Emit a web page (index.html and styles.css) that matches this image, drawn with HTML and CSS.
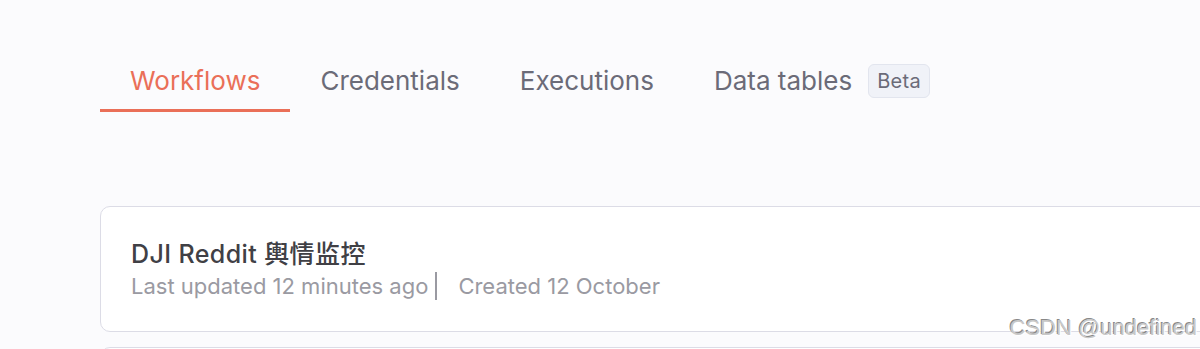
FILE: index.html
```html
<!DOCTYPE html>
<html>
<head>
<meta charset="utf-8">
<link rel="stylesheet" href="styles.css">
</head>
<body>
<div class="page">
  <nav class="tabs">
    <div class="tab active">Workflows</div>
    <div class="tab">Credentials</div>
    <div class="tab">Executions</div>
    <div class="tab">Data tables <span class="badge">Beta</span></div>
  </nav>
  <div class="list">
    <div class="card">
      <div class="title">DJI Reddit 輿情监控</div>
      <div class="meta"><span class="updated">Last updated 12 minutes ago</span><span class="created">Created 12 October</span></div>
    </div>
    <div class="card next"></div>
  </div>
</div>
<div class="watermark">CSDN @undefined</div>
</body>
</html>
```
FILE: styles.css
```css
html, body {
  margin: 0;
  padding: 0;
  background: #fbfbfd;
  overflow: hidden;
  width: 1200px;
  height: 349px;
}
body {
  font-family: Inter, "Noto Sans CJK SC", sans-serif;
  position: relative;
}
.page {
  padding: 60px 0 0 100px;
}
.tabs {
  display: flex;
  align-items: flex-start;
}
.tab {
  padding: 0 30px;
  height: 52px;
  line-height: 42px;
  font-size: 26px;
  color: #6b6b78;
  border-bottom: 3px solid transparent;
  display: flex;
  align-items: flex-start;
  gap: 16px;
  box-sizing: border-box;
}
.tab.active {
  color: #ea6f58;
  border-bottom-color: #ea6f58;
}
.badge {
  margin-top: 4px;
  font-size: 20px;
  line-height: 32px;
  padding: 0 8px;
  border: 1px solid #e2e5ee;
  background: #f0f2f8;
  border-radius: 6px;
  color: #6b6b78;
  letter-spacing: 0.3px;
}
.list {
  margin-top: 94px;
  display: flex;
  flex-direction: column;
  gap: 15px;
}
.card {
  width: 1200px;
  height: 126px;
  box-sizing: border-box;
  background: #fff;
  border: 1px solid #dcdce6;
  border-radius: 10px;
  padding: 32px 30px;
}
.title {
  font-size: 25px;
  line-height: 30px;
  color: #404045;
  font-weight: 500;
  letter-spacing: 0.4px;
}
.meta {
  font-size: 22px;
  line-height: 28px;
  color: #9a9aa2;
  display: flex;
  margin-top: 3px;
}
.updated {
  padding-right: 7px;
  border-right: 2px solid #9a9aa2;
  margin-right: 21px;
}
.watermark {
  position: absolute;
  right: 3px;
  bottom: 8px;
  font-family: "Liberation Sans", Arial, sans-serif;
  font-size: 22px;
  color: #c8c8c8;
  text-shadow: 1px 1px 0 #fff, -1px -1px 0 #888;
}
```
